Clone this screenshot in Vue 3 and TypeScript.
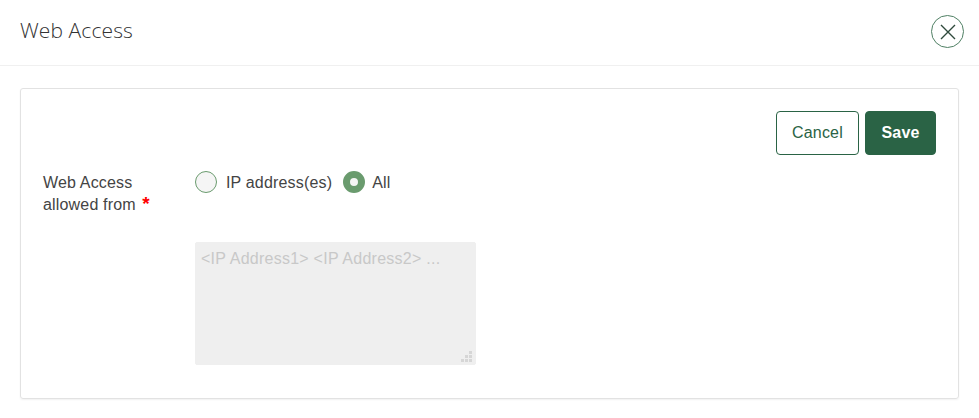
<script setup lang="ts">
const title: string = 'Web Access'
const grip: [number, number][] = [
  [8, 0],
  [4, 4],
  [8, 4],
  [0, 8],
  [4, 8],
  [8, 8],
]
</script>

<template>
  <div class="dialog">
    <header class="header">
      <h1 class="title">{{ title }}</h1>
      <button class="close" type="button" aria-label="Close">
        <svg width="18" height="18" viewBox="0 0 18 18" aria-hidden="true">
          <path d="M2 2 L16 16 M16 2 L2 16" stroke="#2f4a3c" stroke-width="1.4" fill="none" />
        </svg>
      </button>
    </header>
    <main class="card">
      <div class="actions">
        <button class="btn cancel" type="button">Cancel</button>
        <button class="btn save" type="button">Save</button>
      </div>
      <div class="row">
        <div class="label">Web Access<br />allowed from <span class="req">*</span></div>
        <div class="control">
          <div class="radios">
            <label class="radio"><span class="dot"></span><span class="text">IP address(es)</span></label>
            <label class="radio tight"><span class="dot on"></span><span class="text">All</span></label>
          </div>
          <div class="area-wrap">
            <textarea class="area" disabled placeholder="<IP Address1> <IP Address2> ..."></textarea>
            <svg class="grip" width="11" height="11" viewBox="0 0 11 11" aria-hidden="true">
              <rect v-for="(p, i) in grip" :key="i" :x="p[0]" :y="p[1]" width="3" height="3" fill="#d6d6d6" />
            </svg>
          </div>
        </div>
      </div>
    </main>
  </div>
</template>

<style>
html, body { margin: 0; background: #fff; }
</style>

<style scoped>
.dialog {
  width: 979px;
  height: 418px;
  box-sizing: border-box;
  font-family: "Liberation Sans", Arial, sans-serif;
  font-size: 16px;
  letter-spacing: 0.17px;
  color: #444;
  overflow: hidden;
}
.header {
  height: 66px;
  box-sizing: border-box;
  border-bottom: 1px solid #f0f0f0;
  display: flex;
  align-items: center;
  justify-content: space-between;
  padding: 0 15px 2px 20px;
}
.title {
  margin: 0 0 3px;
  font-family: "Open Sans", sans-serif;
  font-weight: 300;
  font-size: 21px;
  letter-spacing: 0.1px;
  color: #333;
}
.close {
  width: 33px;
  height: 33px;
  padding: 0;
  border: 1px solid #4f8064;
  border-radius: 50%;
  background: #fff;
  display: flex;
  align-items: center;
  justify-content: center;
}
.card {
  margin: 22px 20px 0;
  height: 311px;
  box-sizing: border-box;
  border: 1px solid #e2e2e2;
  border-radius: 3px;
  box-shadow: 0 1px 2px rgba(0, 0, 0, 0.06);
  padding: 22px 22px 0;
}
.actions {
  display: flex;
  justify-content: flex-end;
  gap: 6px;
}
.btn {
  height: 44px;
  box-sizing: border-box;
  border-radius: 4px;
  font-family: "Liberation Sans", Arial, sans-serif;
  font-size: 16px;
  letter-spacing: 0.17px;
}
.cancel {
  width: 83px;
  border: 1px solid #2a6345;
  background: #fff;
  color: #2a6345;
}
.save {
  width: 71px;
  border: 1px solid #2a6345;
  background: #2a6345;
  color: #fff;
  font-weight: 700;
}
.row {
  display: flex;
  margin-top: 16px;
}
.label {
  width: 152px;
  line-height: 22px;
  padding-top: 1px;
}
.req {
  color: #f00;
  margin-left: 2px;
  font-weight: 700;
  font-size: 19px;
  line-height: 0;
}
.radios {
  display: flex;
  gap: 11px;
  height: 22px;
}
.radio {
  display: flex;
  align-items: center;
  gap: 9px;
}
.radio.tight {
  gap: 7px;
}
.text {
  padding-top: 2px;
}
.dot {
  width: 22px;
  height: 22px;
  box-sizing: border-box;
  border-radius: 50%;
  border: 1px solid #6a9b6e;
  background: #f5f5f5;
}
.dot.on {
  border: 7px solid #6a9b6e;
  background: #f5f5f5;
}
.area-wrap {
  position: relative;
  width: 281px;
  height: 123px;
  margin-top: 49px;
}
.area {
  display: block;
  width: 100%;
  height: 100%;
  box-sizing: border-box;
  border: 1px solid #efefef;
  border-radius: 2px;
  background: #efefef;
  padding: 6px 5px;
  font-family: "Liberation Sans", Arial, sans-serif;
  font-size: 16px;
  letter-spacing: 0.25px;
  line-height: 20px;
  outline: none;
  resize: none;
}
.area::placeholder {
  color: #c8c8c8;
  opacity: 1;
}
.grip {
  position: absolute;
  right: 4px;
  bottom: 3px;
}
</style>
